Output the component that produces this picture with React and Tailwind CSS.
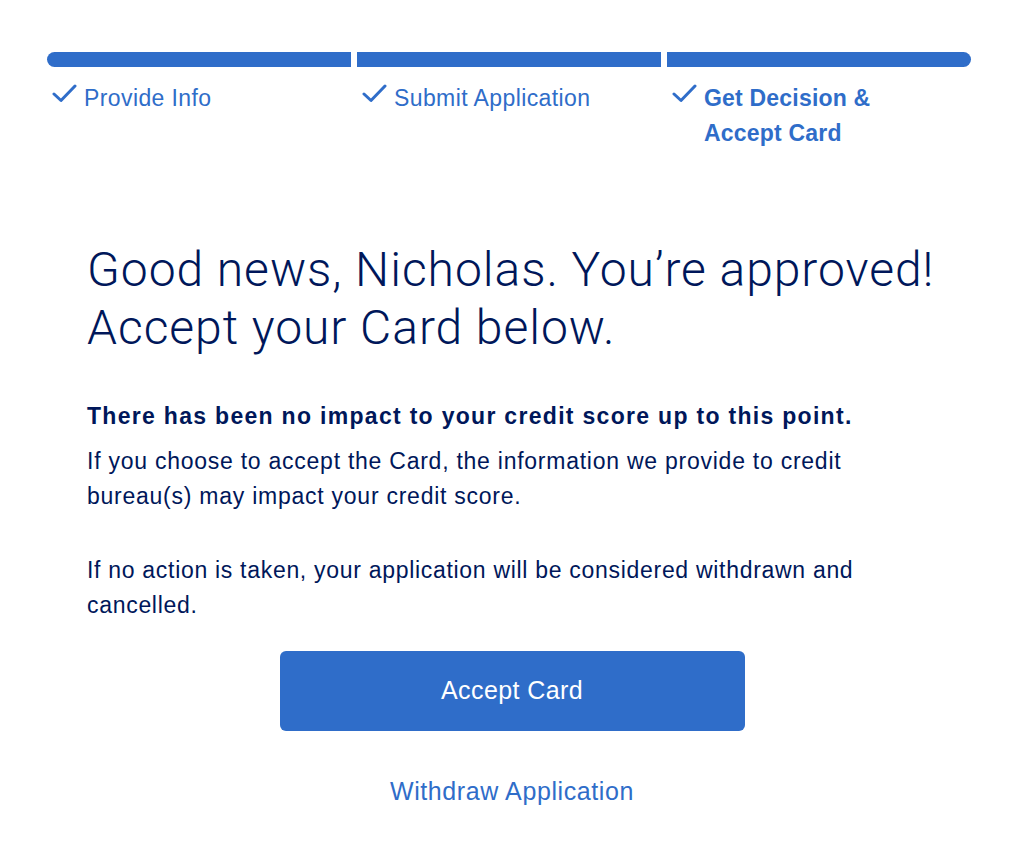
import React from "react";

const steps = [
  { label: "Provide Info", bold: false },
  { label: "Submit Application", bold: false },
  { label: "Get Decision & Accept Card", bold: true },
];

const Check = () => (
  <svg width="25" height="19" viewBox="0 0 25 19" fill="none" className="shrink-0 -mt-[1px]">
    <polyline
      points="2,10 9,16.5 23,2"
      stroke="#2f6dc9"
      strokeWidth="3"
      strokeLinecap="round"
      strokeLinejoin="round"
    />
  </svg>
);

export default function App() {
  return (
    <div
      className="min-h-[848px] bg-white text-[#00175a]"
      style={{ fontFamily: '"Liberation Sans", Arial, sans-serif' }}
    >
      {/* Progress */}
      <div className="pt-[52px] pl-[47px] w-[971px]">
        <div className="flex gap-[6px]">
          {steps.map((s, i) => (
            <div key={s.label} className="w-[304px]">
              <div
                className={`h-[15px] bg-[#2f6dc9] ${
                  i === 0 ? "rounded-l-full" : i === 2 ? "rounded-r-full" : ""
                }`}
              />
              <div className="flex gap-[7px] pl-[5px] pt-[18px]">
                <Check />
                <span
                  className={`text-[23px] leading-[35px] -mt-[4px] text-[#2f6dc9] ${
                    s.bold ? "font-bold tracking-[0.2px] w-[190px]" : "tracking-[0.4px]"
                  }`}
                >
                  {s.label}
                </span>
              </div>
            </div>
          ))}
        </div>
      </div>

      {/* Content */}
      <div className="w-[850px] ml-[87px] pt-[90px]">
        <h1
          className="text-[48px] leading-[58px] font-light tracking-[0.95px]"
          style={{ fontFamily: 'Roboto, "Liberation Sans", sans-serif' }}
        >
          Good news, Nicholas. You’re approved!
          <br />
          Accept your Card below.
        </h1>

        <p className="mt-[42px] text-[23px] leading-[35px] font-bold tracking-[1.3px]">
          There has been no impact to your credit score up to this point.
        </p>
        <p className="mt-[10px] text-[23px] leading-[35px] tracking-[0.75px]">
          If you choose to accept the Card, the information we provide to credit
          bureau(s) may impact your credit score.
        </p>
        <p className="mt-[39px] text-[23px] leading-[35px] tracking-[0.7px]">
          If no action is taken, your application will be considered withdrawn and
          cancelled.
        </p>
      </div>

      <div className="flex flex-col items-center pt-[28px]">
        <button className="w-[465px] h-[80px] rounded-[6px] bg-[#2f6dc9] text-white text-[25px] tracking-[0.4px]">
          Accept Card
        </button>
        <button className="mt-[42px] text-[25px] leading-[36px] tracking-[0.6px] text-[#2f6dc9]">
          Withdraw Application
        </button>
      </div>
    </div>
  );
}
